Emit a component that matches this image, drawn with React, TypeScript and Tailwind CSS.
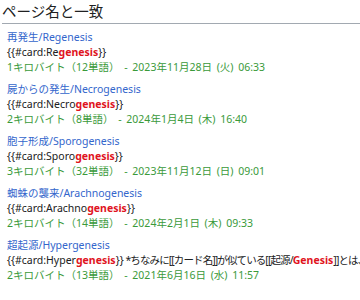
import React from "react";

const font = '"Noto Sans", "Noto Sans CJK JP", sans-serif';

type R = { t: string; e: string; pre: string; meta: string; extra?: boolean };

const results: R[] = [
  { t: "再発生", e: "Regenesis", pre: "Re", meta: "1キロバイト（12単語） - 2023年11月28日 (火) 06:33" },
  { t: "屍からの発生", e: "Necrogenesis", pre: "Necro", meta: "2キロバイト（8単語） - 2024年1月4日 (木) 16:40" },
  { t: "胞子形成", e: "Sporogenesis", pre: "Sporo", meta: "3キロバイト（32単語） - 2023年11月12日 (日) 09:01" },
  { t: "蜘蛛の襲来", e: "Arachnogenesis", pre: "Arachno", meta: "2キロバイト（14単語） - 2024年2月1日 (木) 09:33" },
  { t: "超起源", e: "Hypergenesis", pre: "Hyper", meta: "2キロバイト（13単語） - 2021年6月16日 (水) 11:57", extra: true },
];

export default function App() {
  return (
    <div className="w-[360px] h-[300px] overflow-hidden bg-white pl-[2px]" style={{ fontFamily: font }}>
      <div
        className="text-[14.5px] leading-[20px] text-[#202122] pt-[1px] pb-[2px] border-b border-[#a2a9b1]"
        style={{ fontFamily: '"Noto Sans CJK JP", sans-serif' }}
      >
        ページ名と一致
      </div>
      <div className="pl-[5px] pt-[6px] flex flex-col gap-[7px] text-[10.5px] leading-[15px]">
        {results.map((r) => (
          <div key={r.e} className="flex flex-col">
            <div className="text-[#3366cc] whitespace-nowrap">
              {r.t}/{r.e}
            </div>
            <div className="text-[#202122] whitespace-nowrap">
              {"{{#card:"}
              {r.pre}
              <span className="font-bold text-[#e0141e]">genesis</span>
              {"}}"}
              {r.extra && (
                <span className="tracking-[-0.9px]">
                  {" *ちなみに[[カード名]]が似ている[[起源/"}
                  <span className="font-bold text-[#e0141e] tracking-normal">Genesis</span>
                  {"]]とは、"}
                </span>
              )}
            </div>
            <div className="text-[#3a9a3a] whitespace-nowrap [word-spacing:2px]">{r.meta}</div>
          </div>
        ))}
      </div>
    </div>
  );
}
